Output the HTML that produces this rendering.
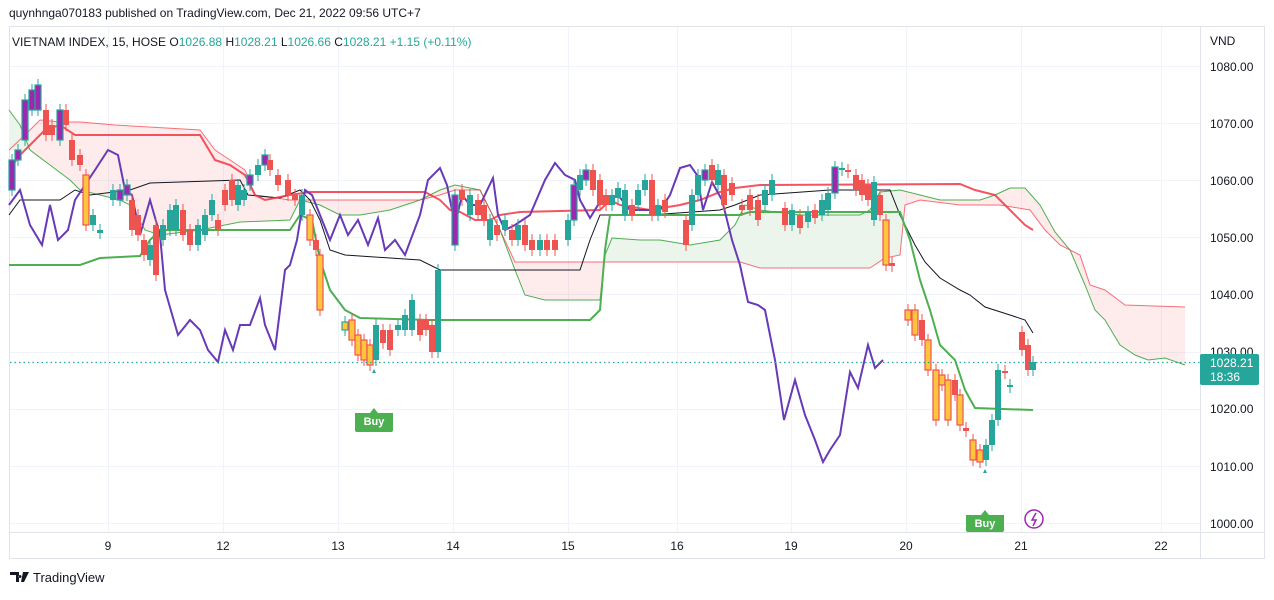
<!DOCTYPE html>
<html><head><meta charset="utf-8"><style>
body{margin:0;background:#fff;width:1274px;height:595px;overflow:hidden;font-family:"Liberation Sans",sans-serif;}
svg text{font-family:"Liberation Sans",sans-serif;}
</style></head><body>
<svg id="s" width="1274" height="595" xmlns="http://www.w3.org/2000/svg">
<rect x="0" y="0" width="1274" height="595" fill="#fff"/>
<text x="9" y="17" font-size="12" fill="#131722">quynhnga070183 published on TradingView.com, Dec 21, 2022 09:56 UTC+7</text>
<rect x="9.5" y="26.5" width="1255" height="532" fill="none" stroke="#e0e3eb"/>
<g stroke="#f0f3fa" stroke-width="1">
<line x1="10" x2="1200" y1="66.5" y2="66.5"/><line x1="10" x2="1200" y1="123.5" y2="123.5"/><line x1="10" x2="1200" y1="180.5" y2="180.5"/><line x1="10" x2="1200" y1="237.5" y2="237.5"/><line x1="10" x2="1200" y1="294.5" y2="294.5"/><line x1="10" x2="1200" y1="352.5" y2="352.5"/><line x1="10" x2="1200" y1="409.5" y2="409.5"/><line x1="10" x2="1200" y1="466.5" y2="466.5"/><line x1="10" x2="1200" y1="523.5" y2="523.5"/>
<line y1="27" y2="532" x1="108.5" x2="108.5"/><line y1="27" y2="532" x1="223.5" x2="223.5"/><line y1="27" y2="532" x1="338.5" x2="338.5"/><line y1="27" y2="532" x1="453.5" x2="453.5"/><line y1="27" y2="532" x1="568.5" x2="568.5"/><line y1="27" y2="532" x1="677.5" x2="677.5"/><line y1="27" y2="532" x1="791.5" x2="791.5"/><line y1="27" y2="532" x1="906.5" x2="906.5"/><line y1="27" y2="532" x1="1021.5" x2="1021.5"/><line y1="27" y2="532" x1="1161.5" x2="1161.5"/>
</g>
<line x1="1200.5" x2="1200.5" y1="27" y2="558" stroke="#e0e3eb"/>
<line x1="10" x2="1264" y1="532.5" y2="532.5" stroke="#e0e3eb"/>
<g id="cloud"></g>
<g id="lines"></g>
<g id="candles"></g>
<line x1="10" x2="1200" y1="362.5" y2="362.5" stroke="#26a69a" stroke-dasharray="1.5,3" stroke-width="1.2"/>
<g>
<path d="M355 413 h15 l4 -5 l4 5 h15 v17 a2 2 0 0 1 -2 2 h-34 a2 2 0 0 1 -2 -2z" fill="#4caf50"/>
<text x="374" y="425" font-size="11" fill="#fff" text-anchor="middle" font-weight="bold">Buy</text>
<path d="M966 515 h15 l4 -5 l4 5 h15 v15 a2 2 0 0 1 -2 2 h-34 a2 2 0 0 1 -2 -2z" fill="#4caf50"/>
<text x="985" y="527" font-size="11" fill="#fff" text-anchor="middle" font-weight="bold">Buy</text>
<path d="M372 373 l2 -4 l2 4z" fill="#26a69a"/><path d="M983 473 l2 -4 l2 4z" fill="#26a69a"/>
<circle cx="1034" cy="519" r="9" fill="none" stroke="#9c27b0" stroke-width="1.5"/>
<path d="M1036 513 l-4 7 h4 l-3 6" fill="none" stroke="#9c27b0" stroke-width="1.5"/>
</g>
<g font-size="12" fill="#131722">
<text x="12" y="46" fill="#131722">VIETNAM INDEX, 15, HOSE <tspan>O</tspan><tspan fill="#26a69a">1026.88</tspan> H<tspan fill="#26a69a">1028.21</tspan> L<tspan fill="#26a69a">1026.66</tspan> C<tspan fill="#26a69a">1028.21</tspan> <tspan fill="#26a69a">+1.15 (+0.11%)</tspan></text>
<text x="1210" y="45">VND</text>
<text x="1210" y="71">1080.00</text><text x="1210" y="128">1070.00</text><text x="1210" y="185">1060.00</text><text x="1210" y="242">1050.00</text><text x="1210" y="299">1040.00</text><text x="1210" y="356">1030.00</text><text x="1210" y="413">1020.00</text><text x="1210" y="471">1010.00</text><text x="1210" y="528">1000.00</text>
<g text-anchor="middle"><text x="108" y="550">9</text><text x="223" y="550">12</text><text x="338" y="550">13</text><text x="453" y="550">14</text><text x="568" y="550">15</text><text x="677" y="550">16</text><text x="791" y="550">19</text><text x="906" y="550">20</text><text x="1021" y="550">21</text><text x="1161" y="550">22</text></g>
</g>
<rect x="1200" y="354" width="59" height="31" rx="2" fill="#26a69a"/>
<text x="1210" y="367" font-size="12" fill="#fff">1028.21</text>
<text x="1210" y="381" font-size="12" fill="#fff">18:36</text>
<path d="M10 572 h9 v10 h-3 v-7 h-6z M20 575 a1.5 1.5 0 1 0 0.1 0z M23 572 h6 l-5 10 h-3z" fill="#131722"/>
<text x="33" y="582" font-size="13" fill="#131722">TradingView</text>
</svg>
<script>
var NS="http://www.w3.org/2000/svg";
function el(p,t,a){var e=document.createElementNS(NS,t);for(var k in a)e.setAttribute(k,a[k]);p.appendChild(e);return e;}
function pts(a){var s=[];for(var i=0;i<a.length;i+=2)s.push(a[i]+","+a[i+1]);return s.join(" ");}
var A=[9,110,20,125,30,150,50,165,70,180,80,190,100,195,120,200,130,205,145,230,160,235,200,230,240,222,290,220,300,200,320,205,340,215,360,215,390,210,420,200,440,190,455,185,480,190,500,230,515,270,525,295,545,300,600,300,605,255,612,238,640,240,660,240,690,245,720,240,735,225,745,205,760,210,800,215,860,215,870,210,880,192,900,190,940,200,980,200,995,195,1010,188,1025,188,1040,205,1055,232,1070,250,1085,285,1095,310,1105,320,1120,345,1135,355,1148,360,1165,358,1185,365];
var B=[9,150,25,135,40,120,60,122,80,122,115,125,200,130,215,150,230,160,245,170,255,195,290,200,420,200,440,195,455,190,480,190,500,230,515,262,590,262,740,262,760,268,870,268,885,258,900,255,905,205,920,200,960,205,1000,205,1030,210,1045,230,1060,245,1080,255,1090,285,1105,290,1125,305,1185,307];
var c=document.getElementById("cloud");
var poly=A.slice();for(var i=B.length-2;i>=0;i-=2)poly.push(B[i],B[i+1]);
el(c,"polygon",{points:pts(poly),fill:"rgba(242,54,69,0.1)"});
el(c,"polygon",{points:pts([605,262,605,255,612,238,640,240,660,240,690,245,720,240,735,225,745,205,760,210,800,215,860,215,870,210,880,192,900,190,905,205,900,255,885,258,870,268,760,268,740,262]),fill:"#ebf5ec"});
el(c,"polygon",{points:pts([9,110,20,125,30,150,9,150]),fill:"#ebf5ec"});
el(c,"polyline",{points:pts(A),fill:"none",stroke:"#4caf50","stroke-width":1});
el(c,"polyline",{points:pts(B),fill:"none",stroke:"#f23645","stroke-width":1,"stroke-opacity":0.7});
var L=document.getElementById("lines");
var black=[9,215,20,200,60,200,75,190,90,195,130,190,150,183,240,180,248,195,280,198,300,190,310,200,320,220,330,250,345,255,420,260,440,270,580,270,590,240,600,215,650,215,720,210,735,205,760,195,830,190,890,190,900,215,915,245,925,262,940,278,960,290,970,295,985,307,1010,315,1025,320,1033,333];
var red=[9,170,20,155,35,140,45,130,60,125,75,135,200,135,215,160,230,165,245,175,255,195,265,200,290,195,310,192,425,192,440,200,450,210,460,212,475,220,490,220,500,215,520,212,600,210,610,200,620,205,650,210,680,205,700,200,720,192,735,188,760,185,960,184,975,190,995,195,1010,210,1025,225,1033,230];
var green=[9,265,80,265,100,258,140,256,150,240,160,230,290,230,300,215,312,220,320,260,330,290,345,310,360,318,430,320,590,320,600,310,605,250,610,215,740,215,750,212,900,212,910,240,920,280,930,310,940,345,955,360,965,390,975,408,1033,410];
var purple=[9,205,20,190,30,225,42,245,50,205,58,240,68,230,75,200,85,185,95,170,108,150,118,155,125,190,132,195,140,235,150,200,160,235,165,290,178,335,190,320,200,330,208,350,218,362,225,330,233,350,240,325,250,325,260,298,265,325,275,350,285,270,290,265,297,240,305,190,312,195,318,210,330,240,340,215,348,235,358,220,368,245,378,218,385,250,395,240,405,255,420,215,428,180,440,168,447,185,455,225,462,195,470,205,480,205,493,178,498,215,505,230,515,225,530,215,545,180,555,163,565,175,575,180,580,200,590,218,598,205,608,200,618,195,630,210,640,210,660,210,670,195,680,168,690,165,697,175,703,210,712,182,722,200,732,240,740,265,748,302,758,305,765,310,775,360,784,420,795,380,805,415,815,440,823,462,830,450,840,435,850,372,858,388,868,345,875,368,883,360];
el(L,"polyline",{points:pts(black),fill:"none",stroke:"#131722","stroke-width":1});
el(L,"polyline",{points:pts(red),fill:"none",stroke:"#f23645","stroke-width":2,"stroke-opacity":0.85});
el(L,"polyline",{points:pts(green),fill:"none",stroke:"#4caf50","stroke-width":2});
el(L,"polyline",{points:pts(purple),fill:"none",stroke:"#673ab7","stroke-width":2});
// x, top, bottom, color(t teal,r red,o orange-red,y orange-teal,p purple)
var C=[[12,160,190,"p"],[18,150,160,"p"],[25,100,140,"p"],[32,90,110,"p"],[38,85,110,"p"],[46,110,135,"r"],[52,125,135,"r"],[60,110,140,"p"],[66,110,125,"r"],[72,140,160,"r"],[80,155,165,"r"],[86,175,225,"o"],[93,215,225,"t"],[100,230,233,"t"],[113,190,200,"t"],[120,190,200,"p"],[127,185,195,"p"],[132,200,230,"r"],[138,215,235,"r"],[144,240,255,"r"],[150,245,260,"t"],[156,225,275,"r"],[163,225,240,"t"],[170,210,230,"t"],[176,205,230,"t"],[183,210,235,"r"],[190,230,245,"r"],[198,225,245,"t"],[205,215,235,"t"],[212,200,215,"t"],[218,220,230,"r"],[225,190,205,"r"],[232,180,200,"r"],[238,185,205,"t"],[244,190,200,"t"],[250,175,185,"p"],[258,165,175,"t"],[265,155,165,"p"],[270,160,170,"r"],[278,175,185,"r"],[288,180,195,"r"],[295,195,200,"r"],[302,195,215,"t"],[310,215,240,"o"],[316,240,250,"r"],[320,255,310,"o"],[345,322,330,"y"],[352,320,340,"o"],[358,335,355,"o"],[364,340,360,"o"],[370,345,365,"o"],[376,325,360,"t"],[383,330,343,"r"],[390,330,350,"r"],[398,325,330,"t"],[405,315,330,"t"],[412,300,330,"t"],[420,320,335,"r"],[426,320,330,"r"],[432,325,352,"r"],[438,270,352,"t"],[455,195,245,"p"],[462,190,200,"r"],[470,195,215,"t"],[478,200,215,"r"],[484,205,220,"r"],[490,220,240,"t"],[497,225,235,"r"],[505,220,230,"t"],[512,230,240,"r"],[518,225,240,"t"],[525,225,245,"r"],[532,240,250,"r"],[540,240,250,"t"],[547,240,250,"r"],[555,240,250,"r"],[568,220,240,"t"],[574,185,220,"p"],[580,175,190,"t"],[586,170,180,"p"],[593,170,190,"r"],[600,180,205,"r"],[606,195,205,"r"],[612,195,205,"t"],[618,188,198,"t"],[625,190,215,"t"],[632,205,215,"r"],[638,190,205,"t"],[645,180,190,"t"],[652,180,215,"r"],[658,205,215,"t"],[665,200,212,"r"],[686,220,245,"r"],[692,195,225,"t"],[698,175,195,"t"],[705,170,180,"p"],[712,165,180,"r"],[718,170,185,"t"],[724,175,205,"r"],[732,183,195,"r"],[742,205,210,"r"],[750,195,210,"r"],[758,200,220,"r"],[765,190,205,"t"],[772,180,195,"t"],[785,208,225,"r"],[792,210,225,"t"],[800,215,228,"r"],[808,212,222,"t"],[815,210,218,"r"],[822,200,215,"t"],[828,193,210,"t"],[835,167,193,"p"],[842,168,170,"t"],[848,170,172,"r"],[856,175,190,"r"],[862,180,195,"r"],[868,185,200,"r"],[874,182,220,"t"],[880,195,215,"r"],[886,220,265,"o"],[892,263,266,"r"],[908,310,320,"o"],[915,310,335,"o"],[922,320,340,"r"],[928,340,370,"o"],[936,370,420,"o"],[942,375,385,"o"],[948,380,420,"o"],[955,380,395,"r"],[960,395,425,"o"],[966,428,431,"r"],[973,440,460,"o"],[980,450,462,"o"],[986,445,460,"t"],[992,420,445,"t"],[998,370,420,"t"],[1005,371,373,"r"],[1010,385,386,"t"],[1022,332,350,"r"],[1028,345,370,"r"],[1033,362,370,"t"]];
var g=document.getElementById("candles");
C.forEach(function(d){var col={t:"#26a69a",r:"#ef5350",o:"#ef5350",y:"#26a69a",p:"#26a69a"}[d[3]];
var fill={t:"#26a69a",r:"#ef5350",o:"#ffc53d",y:"#ffc53d",p:"#9c27b0"}[d[3]];
var h=Math.max(2,d[2]-d[1]);
el(g,"line",{x1:d[0],x2:d[0],y1:d[1]-6,y2:d[1]+h+6,stroke:col,"stroke-width":1});
el(g,"rect",{x:d[0]-3,y:d[1],width:6,height:h,fill:fill,stroke:col,"stroke-width":(d[3]=="o"||d[3]=="y"||d[3]=="p")?1.2:0});});
</script>
</body></html>
